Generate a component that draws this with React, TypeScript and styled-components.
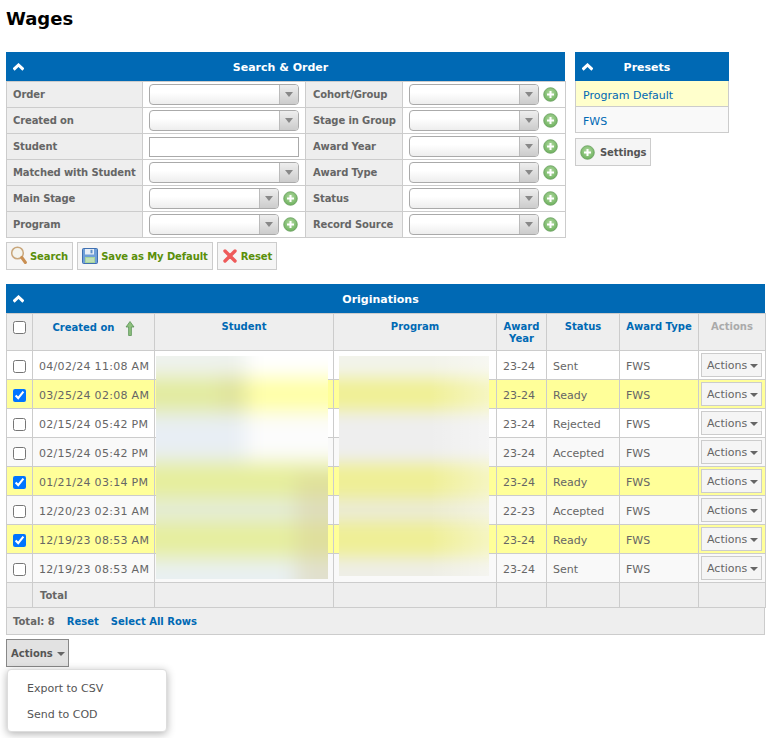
import React from 'react';
import styled, { createGlobalStyle } from 'styled-components';

const Global = createGlobalStyle`
  html, body { margin: 0; padding: 0; background: #fff; }
  body { font-family: "DejaVu Sans", Verdana, sans-serif; font-size: 11px; color: #666; }
  * { box-sizing: border-box; }
`;

const Page = styled.div`
  width: 771px;
  height: 738px;
  padding: 7px 6px 0;
  overflow: hidden;
`;
const Title = styled.h1`
  margin: 0 0 22px;
  height: 23px;
  font-size: 18px;
  line-height: 23px;
  font-weight: bold;
  color: #000;
`;
const TopRow = styled.div`
  display: flex;
  align-items: flex-start;
  gap: 10px;
`;
const SearchColumn = styled.div`
  width: 559px;
`;
const PresetColumn = styled.div`
  width: 154px;
`;
const PanelHeader = styled.div`
  height: 29px;
  background: #0069b4;
  display: flex;
  align-items: center;
  padding: 1px 28px 0 7px;
  color: #fff;
  font-weight: bold;
`;
const HeaderTitle = styled.div`
  flex: 1;
  text-align: center;
`;
const FormTable = styled.table`
  width: 559px;
  table-layout: fixed;
  border-collapse: collapse;
`;
const Label = styled.td`
  height: 26px;
  padding: 0 6px;
  background: #eee;
  border: 1px solid #ccc;
  font-size: 10px;
  font-weight: bold;
  letter-spacing: -0.12px;
  white-space: nowrap;
  color: #666;
  &:nth-child(3) {
    padding-left: 7px;
  }
`;
const FieldCell = styled.td`
  height: 26px;
  padding: 0 0 0 6px;
  background: #fff;
  border: 1px solid #ccc;
`;
const FieldRow = styled.div`
  display: flex;
  align-items: center;
  gap: 4px;
`;
const Select = styled.div<{ $narrow?: boolean }>`
  width: ${p => (p.$narrow ? 130 : 150)}px;
  height: 21px;
  display: flex;
  justify-content: flex-end;
  border: 1px solid #aaa;
  border-radius: 4px;
  background: linear-gradient(#fff 40%, #eee);
  overflow: hidden;
`;
const SelectArrow = styled.div`
  width: 19px;
  border-left: 1px solid #bbb;
  background: linear-gradient(#eee, #ccc);
  display: flex;
  align-items: center;
  justify-content: center;
  &::after {
    content: '';
    border-left: 4px solid transparent;
    border-right: 4px solid transparent;
    border-top: 5px solid #888;
  }
`;
const TextInput = styled.div`
  width: 150px;
  height: 20px;
  border: 1px solid #aaa;
  background: #fff;
`;
const ButtonRow = styled.div`
  display: flex;
  gap: 4px;
  margin-top: 4px;
`;
const ToolButton = styled.div<{ $dark?: boolean }>`
  height: 28px;
  display: flex;
  align-items: center;
  gap: ${p => (p.$dark ? 5 : 3)}px;
  padding: 0 4px;
  background: #f5f5f5;
  border: 1px solid #ccc;
  font-size: 10px;
  font-weight: bold;
  letter-spacing: -0.1px;
  white-space: nowrap;
  color: ${p => (p.$dark ? '#555' : '#5a8f0a')};
`;
const PresetItem = styled.div<{ $active?: boolean }>`
  height: 26px;
  display: flex;
  align-items: center;
  padding: 4px 7px 0;
  border: 1px solid #ccc;
  border-top: 0;
  color: #0069b4;
  background: ${p => (p.$active ? '#ffc' : '#f9f9f9')};
`;
const SettingsWrap = styled.div`
  display: flex;
  margin-top: 5px;
`;
const Section = styled.section`
  position: relative;
  width: 759px;
  margin-top: 14px;
`;
const DataTable = styled.table`
  width: 759px;
  table-layout: fixed;
  border-collapse: collapse;
`;
const HeadCell = styled.th<{ $muted?: boolean }>`
  height: 37px;
  padding: 7px 3px 0;
  vertical-align: top;
  background: #eee;
  border: 1px solid #ccc;
  font-size: 10px;
  line-height: 12px;
  font-weight: bold;
  text-align: center;
  color: ${p => (p.$muted ? '#aaa' : '#0069b4')};
`;
const SortLabel = styled.span`
  display: inline-flex;
  align-items: flex-start;
  gap: 10px;
`;
const SortText = styled.span`
  padding-top: 1px;
`;
const Row = styled.tr<{ $tone: string }>`
  background: ${p => p.$tone};
`;
const Cell = styled.td`
  height: 29px;
  padding: 3px 6px 0;
  border: 1px solid #ccc;
  white-space: nowrap;
  color: #666;
`;
const DateCell = styled(Cell)`
  letter-spacing: 0.3px;
`;
const CheckCell = styled(Cell)`
  padding: 0;
  text-align: center;
`;
const ActionCell = styled(Cell)`
  padding: 0 0 0 2px;
`;
const Check = styled.input`
  display: block;
  width: 13px;
  height: 13px;
  margin: 2px auto 0 6px;
`;
const HeadCheck = styled(Check)`
  margin: 0 0 0 3px;
`;
const RowButton = styled.div`
  width: 61px;
  height: 24px;
  display: flex;
  align-items: center;
  gap: 3px;
  padding: 0 0 0 5px;
  background: #f5f5f5;
  border: 1px solid #ccc;
  color: #666;
`;
const Caret = styled.span`
  margin-top: 2px;
  border-left: 4px solid transparent;
  border-right: 4px solid transparent;
  border-top: 4px solid #666;
`;
const TotalCell = styled.td`
  height: 25px;
  padding: 0 7px;
  background: #eee;
  border: 1px solid #ccc;
  font-size: 10px;
  font-weight: bold;
  color: #666;
`;
const Footer = styled.div`
  height: 28px;
  margin-top: -1px;
  display: flex;
  align-items: center;
  gap: 12px;
  padding: 0 6px;
  background: #eee;
  border: 1px solid #ccc;
  font-size: 10px;
  font-weight: bold;
  color: #666;
`;
const FooterLink = styled.span`
  color: #0069b4;
`;
const ActionsButton = styled.div`
  width: 63px;
  height: 28px;
  margin-top: 4px;
  display: flex;
  align-items: center;
  gap: 4px;
  padding: 0 4px;
  background: #e2e2e2;
  border: 1px solid #888;
  font-size: 10px;
  font-weight: bold;
  color: #555;
`;
const Menu = styled.div`
  width: 160px;
  height: 63px;
  margin: 2px 0 0 1px;
  padding: 5px 0;
  background: #fff;
  border: 1px solid #ddd;
  border-radius: 4px;
  box-shadow: 0 2px 8px rgba(0, 0, 0, 0.3);
`;
const MenuItem = styled.div`
  height: 26px;
  padding-left: 19px;
  display: flex;
  align-items: center;
  color: #555;
`;
const BlurPatch = styled.svg<{ $left: number; $w: number; $h: number }>`
  position: absolute;
  left: ${p => p.$left}px;
  top: 72px;
  width: ${p => p.$w}px;
  height: ${p => p.$h}px;
`;

const Chevron = () => (
  <svg width="11" height="8" viewBox="0 0 11 8" style={{ display: 'block' }}>
    <path d="M.6 6.6 5.5 2l4.9 4.6" fill="none" stroke="#fff" strokeWidth="3" />
  </svg>
);

const PlusIcon = () => (
  <svg width="15" height="15" viewBox="0 0 15 15" style={{ display: 'block', flex: 'none' }}>
    <defs>
      <radialGradient id="plusFill" cx="50%" cy="40%" r="60%">
        <stop offset="0" stopColor="#b4dca4" />
        <stop offset="1" stopColor="#6cb05c" />
      </radialGradient>
    </defs>
    <circle cx="7.5" cy="7.5" r="6.8" fill="url(#plusFill)" stroke="#6a9f60" strokeWidth="0.8" />
    <path d="M7.5 4v7M4 7.5h7" stroke="#fff" strokeWidth="2" />
  </svg>
);

const SearchIcon = () => (
  <svg width="16" height="20" viewBox="0 0 16 20" style={{ display: 'block' }}>
    <circle cx="6.5" cy="7" r="5.8" fill="#f4f4ee" stroke="#c9a77c" strokeWidth="1.5" />
    <path d="M10.8 11.5l3.6 5" stroke="#c98f52" strokeWidth="3" strokeLinecap="round" />
  </svg>
);

const SaveIcon = () => (
  <svg width="16" height="16" viewBox="0 0 16 16" style={{ display: 'block' }}>
    <rect x="0.5" y="0.5" width="15" height="15" rx="1" fill="#6f9fd8" stroke="#3f6fb0" />
    <rect x="3" y="1" width="9" height="5.5" fill="#e8eef6" />
    <rect x="8.5" y="1.8" width="2" height="3.5" fill="#5f8fc8" />
    <rect x="3" y="9" width="10" height="6" fill="#a8d49a" />
    <path d="M4 11h8M4 13h8" stroke="#e4f2de" strokeWidth="0.8" />
  </svg>
);

const ResetIcon = () => (
  <svg width="16" height="14" viewBox="0 0 16 14" style={{ display: 'block' }}>
    <path d="M3 2l10 10M13 2 3 12" stroke="#ee5a5a" strokeWidth="3.4" strokeLinecap="round" />
  </svg>
);

const SortArrow = () => (
  <svg width="10" height="15" viewBox="0 0 10 15" style={{ display: 'block' }}>
    <path d="M5 .5 9 6H6.4v8.5H3.6V6H1z" fill="#8ec07e" stroke="#4e8a4a" strokeWidth="0.7" />
  </svg>
);

type Field = { narrow?: boolean; plus?: boolean; input?: boolean };

const FieldControl = ({ narrow, plus, input }: Field) => (
  <FieldRow>
    {input ? (
      <TextInput />
    ) : (
      <Select $narrow={narrow}>
        <SelectArrow />
      </Select>
    )}
    {plus && <PlusIcon />}
  </FieldRow>
);

const formRows: { left: string; field: Field; right: string }[] = [
  { left: 'Order', field: {}, right: 'Cohort/Group' },
  { left: 'Created on', field: {}, right: 'Stage in Group' },
  { left: 'Student', field: { input: true }, right: 'Award Year' },
  { left: 'Matched with Student', field: {}, right: 'Award Type' },
  { left: 'Main Stage', field: { narrow: true, plus: true }, right: 'Status' },
  { left: 'Program', field: { narrow: true, plus: true }, right: 'Record Source' },
];

const YELLOW = '#ffff99';
const dataRows = [
  { d: '04/02/24 11:08 AM', y: '23-24', s: 'Sent', tone: '#fff' },
  { d: '03/25/24 02:08 AM', y: '23-24', s: 'Ready', tone: YELLOW, c: true },
  { d: '02/15/24 05:42 PM', y: '23-24', s: 'Rejected', tone: '#fff' },
  { d: '02/15/24 05:42 PM', y: '23-24', s: 'Accepted', tone: '#f9f9f9' },
  { d: '01/21/24 03:14 PM', y: '23-24', s: 'Ready', tone: YELLOW, c: true },
  { d: '12/20/23 02:31 AM', y: '22-23', s: 'Accepted', tone: '#f9f9f9' },
  { d: '12/19/23 08:53 AM', y: '23-24', s: 'Ready', tone: YELLOW, c: true },
  { d: '12/19/23 08:53 AM', y: '23-24', s: 'Sent', tone: '#f9f9f9' },
];

const widths = [26, 122, 179, 163, 50, 73, 79, 67];

const StudentBlur = () => (
  <BlurPatch $left={150} $w={172} $h={223} viewBox="0 0 172 223">
    <defs>
      <filter
        id="smearA"
        filterUnits="userSpaceOnUse"
        x="-60"
        y="-60"
        width="300"
        height="350"
        colorInterpolationFilters="sRGB"
      >
        <feGaussianBlur stdDeviation="10" />
      </filter>
    </defs>
    <rect width="172" height="223" fill="#fafafa" />
    <g filter="url(#smearA)">
      <rect x="-40" y="-40" width="130" height="62" fill="#eef2ee" />
      <rect x="90" y="-40" width="130" height="62" fill="#ffffff" />
      <rect x="-40" y="22" width="130" height="33" fill="#e2eb9c" />
      <rect x="90" y="22" width="130" height="33" fill="#ffffa4" />
      <rect x="-40" y="55" width="130" height="52" fill="#e8eef4" />
      <rect x="90" y="55" width="130" height="52" fill="#fcfcfc" />
      <rect x="-40" y="107" width="260" height="35" fill="#e6ee9a" />
      <rect x="-40" y="142" width="260" height="24" fill="#e4ecdc" />
      <rect x="-40" y="166" width="260" height="35" fill="#e6ee9c" />
      <rect x="-40" y="201" width="260" height="70" fill="#e9f0f2" />
      <rect x="140" y="118" width="70" height="125" fill="#d4c898" opacity="0.4" />
      <rect x="65" y="20" width="25" height="35" fill="#d8d090" opacity="0.35" />
    </g>
  </BlurPatch>
);

const ProgramBlur = () => (
  <BlurPatch $left={333} $w={150} $h={220} viewBox="0 0 150 220">
    <defs>
      <filter
        id="smearB"
        filterUnits="userSpaceOnUse"
        x="-60"
        y="-60"
        width="280"
        height="350"
        colorInterpolationFilters="sRGB"
      >
        <feGaussianBlur stdDeviation="8" />
      </filter>
      <linearGradient id="fadeB" x1="0" x2="1" y1="0" y2="0">
        <stop offset="0.6" stopColor="#fff" stopOpacity="0" />
        <stop offset="1" stopColor="#fff" stopOpacity="0.4" />
      </linearGradient>
    </defs>
    <rect width="150" height="220" fill="#f2f2ec" />
    <g filter="url(#smearB)">
      <rect x="-40" y="-40" width="230" height="62" fill="#f2f3ea" />
      <rect x="-40" y="22" width="230" height="33" fill="#f0f096" />
      <rect x="-40" y="55" width="230" height="52" fill="#eeeeee" />
      <rect x="-40" y="107" width="230" height="35" fill="#efef96" />
      <rect x="-40" y="142" width="230" height="24" fill="#ebebd4" />
      <rect x="-40" y="166" width="230" height="35" fill="#efef96" />
      <rect x="-40" y="201" width="230" height="60" fill="#eeeee6" />
    </g>
    <rect width="150" height="220" fill="url(#fadeB)" />
  </BlurPatch>
);

export default function App() {
  return (
    <Page>
      <Global />
      <Title>Wages</Title>
      <TopRow>
        <SearchColumn>
          <PanelHeader>
            <Chevron />
            <HeaderTitle>Search &amp; Order</HeaderTitle>
          </PanelHeader>
          <FormTable>
            <colgroup>
              <col style={{ width: 136 }} />
              <col style={{ width: 163 }} />
              <col style={{ width: 97 }} />
              <col style={{ width: 163 }} />
            </colgroup>
            <tbody>
              {formRows.map(r => (
                <tr key={r.left}>
                  <Label>{r.left}</Label>
                  <FieldCell>
                    <FieldControl {...r.field} />
                  </FieldCell>
                  <Label>{r.right}</Label>
                  <FieldCell>
                    <FieldControl narrow plus />
                  </FieldCell>
                </tr>
              ))}
            </tbody>
          </FormTable>
          <ButtonRow>
            <ToolButton>
              <SearchIcon />
              Search
            </ToolButton>
            <ToolButton>
              <SaveIcon />
              Save as My Default
            </ToolButton>
            <ToolButton>
              <ResetIcon />
              Reset
            </ToolButton>
          </ButtonRow>
        </SearchColumn>
        <PresetColumn>
          <PanelHeader>
            <Chevron />
            <HeaderTitle>Presets</HeaderTitle>
          </PanelHeader>
          <PresetItem $active>Program Default</PresetItem>
          <PresetItem>FWS</PresetItem>
          <SettingsWrap>
            <ToolButton $dark>
              <PlusIcon />
              Settings
            </ToolButton>
          </SettingsWrap>
        </PresetColumn>
      </TopRow>
      <Section>
        <PanelHeader>
          <Chevron />
          <HeaderTitle>Originations</HeaderTitle>
        </PanelHeader>
        <DataTable>
          <colgroup>
            {widths.map((w, i) => (
              <col key={i} style={{ width: w }} />
            ))}
          </colgroup>
          <thead>
            <tr>
              <HeadCell>
                <HeadCheck type="checkbox" readOnly />
              </HeadCell>
              <HeadCell>
                <SortLabel>
                  <SortText>Created on</SortText>
                  <SortArrow />
                </SortLabel>
              </HeadCell>
              <HeadCell>Student</HeadCell>
              <HeadCell>Program</HeadCell>
              <HeadCell>Award Year</HeadCell>
              <HeadCell>Status</HeadCell>
              <HeadCell>Award Type</HeadCell>
              <HeadCell $muted>Actions</HeadCell>
            </tr>
          </thead>
          <tbody>
            {dataRows.map((r, i) => (
              <Row key={i} $tone={r.tone}>
                <CheckCell>
                  <Check type="checkbox" readOnly checked={!!r.c} />
                </CheckCell>
                <DateCell>{r.d}</DateCell>
                <Cell />
                <Cell />
                <Cell>{r.y}</Cell>
                <Cell>{r.s}</Cell>
                <Cell>FWS</Cell>
                <ActionCell>
                  <RowButton>
                    Actions
                    <Caret />
                  </RowButton>
                </ActionCell>
              </Row>
            ))}
            <tr>
              <TotalCell />
              <TotalCell>Total</TotalCell>
              <TotalCell />
              <TotalCell />
              <TotalCell />
              <TotalCell />
              <TotalCell />
              <TotalCell />
            </tr>
          </tbody>
        </DataTable>
        <StudentBlur />
        <ProgramBlur />
        <Footer>
          <span>Total: 8</span>
          <FooterLink>Reset</FooterLink>
          <FooterLink>Select All Rows</FooterLink>
        </Footer>
      </Section>
      <ActionsButton>
        Actions
        <Caret />
      </ActionsButton>
      <Menu>
        <MenuItem>Export to CSV</MenuItem>
        <MenuItem>Send to COD</MenuItem>
      </Menu>
    </Page>
  );
}
